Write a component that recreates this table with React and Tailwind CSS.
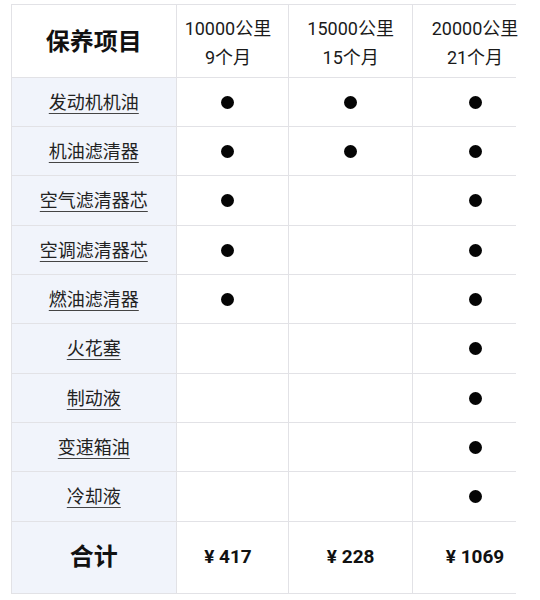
import React from "react";

const items = [
  { name: "发动机机油", m: [1, 1, 1], h: "h-[49px]" },
  { name: "机油滤清器", m: [1, 1, 1], h: "h-[49px]" },
  { name: "空气滤清器芯", m: [1, 0, 1], h: "h-[50px]" },
  { name: "空调滤清器芯", m: [1, 0, 1], h: "h-[49px]" },
  { name: "燃油滤清器", m: [1, 0, 1], h: "h-[49px]" },
  { name: "火花塞", m: [0, 0, 1], h: "h-[50px]" },
  { name: "制动液", m: [0, 0, 1], h: "h-[49px]" },
  { name: "变速箱油", m: [0, 0, 1], h: "h-[49px]" },
  { name: "冷却液", m: [0, 0, 1], h: "h-[50px]" },
];

const colCls = [
  "w-[113px] border-r border-[#e2e2e6] pr-[9px]",
  "w-[124px] border-r border-[#e2e2e6]",
  "w-[103px] pr-0",
];

function Dot() {
  return <span className="block w-[13px] h-[13px] rounded-full bg-[#050505]" />;
}

function Cell({ idx, children }) {
  if (idx === 2) {
    return (
      <div className="w-[103px] flex items-center overflow-visible">
        <div className="w-[124px] shrink-0 flex items-center justify-center">{children}</div>
      </div>
    );
  }
  return <div className={`${colCls[idx]} flex items-center justify-center`}>{children}</div>;
}

export default function App() {
  return (
    <div
      className="w-[540px] h-[600px] bg-white overflow-hidden pt-[4px] pl-[11px]"
      style={{ fontFamily: "Roboto, 'Noto Sans CJK SC', sans-serif" }}
    >
      <div className="w-[505px] border-t border-l border-[#e2e2e6]">
        {/* header */}
        <div className="flex h-[73px] border-b border-[#e2e2e6]">
          <div className="w-[165px] border-r border-[#e2e2e6] flex items-center justify-center text-[24px] font-bold text-[#111] pt-[2px]">
            保养项目
          </div>
          {[
            ["10000公里", "9个月"],
            ["15000公里", "15个月"],
            ["20000公里", "21个月"],
          ].map((t, i) => (
            <Cell key={i} idx={i}>
              <div className="text-center text-[18px] leading-[29px] text-[#1a1a1a] pt-[3px]">
                <div>{t[0]}</div>
                <div>{t[1]}</div>
              </div>
            </Cell>
          ))}
        </div>
        {items.map((it) => (
          <div key={it.name} className={`flex ${it.h} border-b border-[#e2e2e6]`}>
            <div className="w-[165px] border-r border-[#e2e2e6] bg-[#f1f4fb] flex items-center justify-center">
              <span className="text-[18px] text-[#222] underline underline-offset-[4px] decoration-[1px] decoration-[#444]">
                {it.name}
              </span>
            </div>
            {it.m.map((v, i) => (
              <Cell key={i} idx={i}>
                {v ? <Dot /> : null}
              </Cell>
            ))}
          </div>
        ))}
        {/* total */}
        <div className="flex h-[72px] border-b border-[#e2e2e6]">
          <div className="w-[165px] border-r border-[#e2e2e6] bg-[#f1f4fb] flex items-center justify-center text-[24px] font-bold text-[#111] pb-[2px]">
            合计
          </div>
          {["¥ 417", "¥ 228", "¥ 1069"].map((p, i) => (
            <Cell key={i} idx={i}>
              <span className="text-[19px] font-bold text-[#111]">{p}</span>
            </Cell>
          ))}
        </div>
      </div>
    </div>
  );
}
